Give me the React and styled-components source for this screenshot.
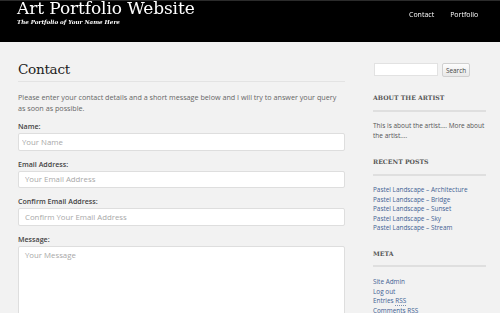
import React from 'react'
import styled, { createGlobalStyle } from 'styled-components'

const GlobalStyle = createGlobalStyle`
  html, body {
    margin: 0;
    padding: 0;
    background: #f2f2f2;
  }
  body {
    font-family: "Open Sans", "DejaVu Sans", sans-serif;
    -webkit-font-smoothing: antialiased;
  }
`

const Page = styled.div`
  width: 500px;
  height: 313px;
  overflow: hidden;
  background: #f2f2f2;
`

const Header = styled.header`
  height: 42px;
  box-sizing: border-box;
  background: #000;
  box-shadow: inset 0 1px 0 #2b2b2b;
  display: flex;
  justify-content: space-between;
  align-items: flex-start;
  padding: 0 22px 0 17px;
`

const Brand = styled.div`
  display: flex;
  flex-direction: column;
  will-change: transform;
`

const SiteTitle = styled.h1`
  margin: 0;
  font-family: "DejaVu Serif", serif;
  font-weight: normal;
  font-size: 17px;
  line-height: 17px;
  color: #fff;
  letter-spacing: -0.1px;
`

const Tagline = styled.div`
  margin-top: 1px;
  font-family: "DejaVu Serif", serif;
  font-weight: bold;
  font-style: italic;
  font-size: 5.6px;
  line-height: 8px;
  color: #fff;
`

const Nav = styled.nav`
  display: flex;
  gap: 16px;
  padding-top: 10px;
  will-change: transform;
`

const NavLink = styled.a`
  font-size: 7px;
  line-height: 10px;
  color: #fff;
  text-decoration: none;
`

const Main = styled.div`
  display: flex;
  gap: 28px;
  padding: 17px 14px 0 18px;
`

const Content = styled.main`
  width: 327px;
  flex-shrink: 0;
`

const PageTitle = styled.h2`
  margin: 0;
  padding-bottom: 2px;
  border-bottom: 1px solid #e3e3e3;
  font-family: "DejaVu Serif", serif;
  font-weight: normal;
  font-size: 13.6px;
  line-height: 20px;
  letter-spacing: -0.3px;
  color: #222;
`

const Intro = styled.p`
  margin: 10px 0 0;
  font-size: 7.2px;
  line-height: 11px;
  color: #666;
`

const Field = styled.div`
  margin-top: ${({ $first }) => ($first ? '7px' : '8px')};
`

const Label = styled.label`
  display: block;
  font-size: 7.1px;
  line-height: 11px;
  font-weight: 600;
  color: #444;
`

const Input = styled.input`
  display: block;
  box-sizing: border-box;
  width: 100%;
  height: 17.5px;
  margin: 1px 0 0;
  padding: 0 ${({ $pad }) => $pad || 6}px;
  border: 1px solid #dedede;
  border-radius: 2px;
  background: #fff;
  font-family: "Open Sans", sans-serif;
  font-size: 7.8px;
  color: #444;
  outline: none;

  &::placeholder {
    color: #a8a8a8;
  }
`

const TextArea = styled.textarea`
  display: block;
  box-sizing: border-box;
  width: 100%;
  height: 90px;
  margin: 1px 0 0;
  padding: 3px 6px;
  border: 1px solid #dedede;
  border-radius: 2px;
  background: #fff;
  font-family: "Open Sans", sans-serif;
  font-size: 7.8px;
  line-height: 10px;
  resize: none;
  outline: none;

  &::placeholder {
    color: #a8a8a8;
  }
`

const Sidebar = styled.aside`
  width: 113px;
  flex-shrink: 0;
`

const SearchRow = styled.form`
  display: flex;
  align-items: flex-start;
  gap: 4px;
  margin: 4px 0 0 1px;
`

const SearchInput = styled.input`
  box-sizing: border-box;
  width: 64px;
  height: 13px;
  margin: 0;
  border: 1px solid #e2e2e2;
  background: #fff;
  outline: none;
`

const SearchButton = styled.button`
  box-sizing: border-box;
  width: 28px;
  height: 14px;
  padding: 0;
  border: 1px solid #d0d0d0;
  border-radius: 2px;
  background: linear-gradient(#fdfdfd, #e8e8e8);
  font-family: "Open Sans", sans-serif;
  font-size: 6.4px;
  color: #444;
`

const Widget = styled.section`
  margin-top: 16px;
`

const WidgetTitle = styled.h3`
  margin: 0;
  padding-bottom: 6.5px;
  border-bottom: 2px solid #dfdfdf;
  font-family: "DejaVu Serif", serif;
  font-weight: bold;
  font-size: 6.2px;
  line-height: 10px;
  color: #555;
`

const WidgetText = styled.p`
  margin: 9.5px 0 0;
  font-size: 6.5px;
  line-height: 10px;
  color: #555;
`

const LinkList = styled.ul`
  list-style: none;
  margin: 9.5px 0 0;
  padding: 0;
`

const LinkItem = styled.li`
  font-size: 6.4px;
  line-height: 9.6px;

  a {
    color: #3e6193;
    text-decoration: none;
  }
`

const Abbr = styled.abbr`
  text-decoration: none;
  border-bottom: 1px dotted #7a8fb0;
`

const posts = ['Architecture', 'Bridge', 'Sunset', 'Sky', 'Stream']

export default function App() {
  return (
    <Page>
      <GlobalStyle />
      <Header>
        <Brand>
          <SiteTitle>Art Portfolio Website</SiteTitle>
          <Tagline>The Portfolio of Your Name Here</Tagline>
        </Brand>
        <Nav>
          <NavLink href="#">Contact</NavLink>
          <NavLink href="#">Portfolio</NavLink>
        </Nav>
      </Header>
      <Main>
        <Content>
          <PageTitle>Contact</PageTitle>
          <Intro>
            Please enter your contact details and a short message below and I will try to answer your query
            as soon as possible.
          </Intro>
          <Field $first>
            <Label>Name:</Label>
            <Input $pad={3} placeholder="Your Name" />
          </Field>
          <Field>
            <Label>Email Address:</Label>
            <Input placeholder="Your Email Address" />
          </Field>
          <Field>
            <Label>Confirm Email Address:</Label>
            <Input placeholder="Confirm Your Email Address" />
          </Field>
          <Field>
            <Label>Message:</Label>
            <TextArea placeholder="Your Message" />
          </Field>
        </Content>
        <Sidebar>
          <SearchRow onSubmit={(e) => e.preventDefault()}>
            <SearchInput />
            <SearchButton>Search</SearchButton>
          </SearchRow>
          <Widget>
            <WidgetTitle>ABOUT THE ARTIST</WidgetTitle>
            <WidgetText>This is about the artist.... More about the artist....</WidgetText>
          </Widget>
          <Widget>
            <WidgetTitle>RECENT POSTS</WidgetTitle>
            <LinkList>
              {posts.map((p) => (
                <LinkItem key={p}>
                  <a href="#">Pastel Landscape – {p}</a>
                </LinkItem>
              ))}
            </LinkList>
          </Widget>
          <Widget>
            <WidgetTitle>META</WidgetTitle>
            <LinkList>
              <LinkItem><a href="#">Site Admin</a></LinkItem>
              <LinkItem><a href="#">Log out</a></LinkItem>
              <LinkItem><a href="#">Entries <Abbr>RSS</Abbr></a></LinkItem>
              <LinkItem><a href="#">Comments <Abbr>RSS</Abbr></a></LinkItem>
            </LinkList>
          </Widget>
        </Sidebar>
      </Main>
    </Page>
  )
}
